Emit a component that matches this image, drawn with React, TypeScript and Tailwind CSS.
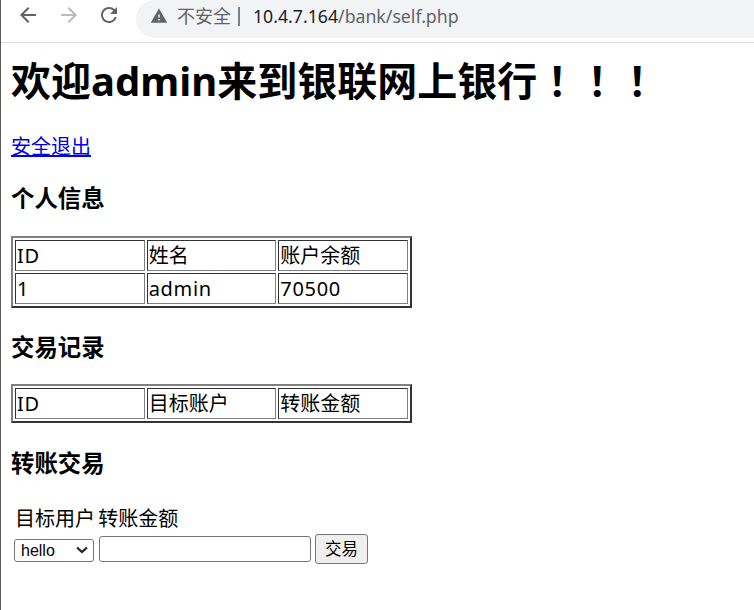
const fontStack = 'font-["Noto_Sans","Noto_Sans_CJK_SC",sans-serif]';

function TopBar() {
  return (
    <div className="flex h-[43px] items-start border-b border-[#dcdcdc] bg-white">
      <div className="flex items-center pl-[15px] pt-[3px]">
        <svg width="24" height="24" viewBox="0 0 24 24" fill="#5f6368">
          <path d="M20 11H7.83l5.59-5.59L12 4l-8 8 8 8 1.41-1.41L7.83 13H20v-2z" />
        </svg>
        <svg className="ml-[17px]" width="24" height="24" viewBox="0 0 24 24" fill="#b9bbbe">
          <path d="M4 11h12.17l-5.59-5.59L12 4l8 8-8 8-1.41-1.41L16.17 13H4v-2z" />
        </svg>
        <svg className="ml-[16px]" width="24" height="24" viewBox="0 0 24 24" fill="#5f6368">
          <path d="M17.65 6.35A7.958 7.958 0 0 0 12 4c-4.42 0-7.99 3.58-7.99 8s3.57 8 7.99 8c3.73 0 6.84-2.55 7.73-6h-2.08A5.99 5.99 0 0 1 12 18c-3.31 0-6-2.69-6-6s2.69-6 6-6c1.66 0 3.14.69 4.22 1.78L13 11h7V4l-2.35 2.35z" />
        </svg>
      </div>
      <div className="ml-[15px] flex h-[38px] flex-1 items-center rounded-l-[19px] bg-[#f1f3f4] pb-[6px] pl-[14px]">
        <svg width="18" height="18" viewBox="0 0 24 24" fill="#5f6368">
          <path d="M1 21h22L12 2 1 21zm12-3h-2v-2h2v2zm0-4h-2v-4h2v4z" />
        </svg>
        <span className="ml-[9px] text-[18px] text-[#5f6368]">不安全</span>
        <span className="ml-[7px] h-[19px] w-[2px] bg-[#7d8186]" />
        <span className="ml-[13px] text-[17.7px] text-[#202124]">10.4.7.164</span>
        <span className="text-[17.7px] text-[#5f6368]">/bank/self.php</span>
      </div>
    </div>
  );
}

function InfoTable({ rows }: { rows: string[][] }) {
  return (
    <table className="w-[401px] table-fixed border-separate border-spacing-[2px] border-2 border-t-[#808080] border-l-[#808080] border-r-[#333333] border-b-[#333333]">
      <tbody>
        {rows.map((row, i) => (
          <tr key={i}>
            {row.map((cell, j) => (
              <td
                key={j}
                className={`h-[31px] border border-t-[#333333] border-l-[#333333] border-r-[#808080] border-b-[#808080] p-[1px] text-[20px] leading-[27px] ${
                  /^[a-z0-9]+$/i.test(cell) ? 'tracking-[0.7px]' : ''
                }`}
              >
                {cell}
              </td>
            ))}
          </tr>
        ))}
      </tbody>
    </table>
  );
}

export default function App() {
  return (
    <div className={`h-[610px] w-[754px] overflow-hidden border-l border-[#5a5a5a] bg-white text-black ${fontStack}`}>
      <TopBar />
      <div className="px-[10px]">
        <h1 className="mt-[9px] text-[40px] font-bold leading-[54px]">
          欢迎admin来到银联网上银行
          <span className='font-["Noto_Sans_CJK_TC",sans-serif]'>！！！</span>
        </h1>
        <a href="#" className="mt-[25px] block w-fit text-[20px] leading-[28px] text-[#0000ee] underline">
          安全退出
        </a>
        <h3 className="mt-[21px] text-[23.4px] font-bold leading-[32px]">个人信息</h3>
        <div className="mt-[22px]">
          <InfoTable
            rows={[
              ['ID', '姓名', '账户余额'],
              ['1', 'admin', '70500'],
            ]}
          />
        </div>
        <h3 className="mt-[23px] text-[23.4px] font-bold leading-[32px]">交易记录</h3>
        <div className="mt-[21px]">
          <InfoTable rows={[['ID', '目标账户', '转账金额']]} />
        </div>
        <h3 className="mt-[24px] text-[23.4px] font-bold leading-[32px]">转账交易</h3>
        <form className="mt-[26px]">
          <div className="pl-[4px] text-[20px] leading-[28px] [word-spacing:-2px]">目标用户 转账金额</div>
          <div className="mt-[1px] flex items-center pl-[3px]">
            <div className="relative h-[23px] w-[80px]">
              <select className='h-[23px] w-[80px] appearance-none rounded-[3px] border border-[#767676] bg-white pl-[6px] font-["Liberation_Sans",sans-serif] text-[16px] leading-none'>
                <option>hello</option>
              </select>
              <svg className="pointer-events-none absolute left-[62px] top-[8px]" width="12" height="8" viewBox="0 0 12 8" fill="none" stroke="#222222" strokeWidth="2.2">
                <path d="M1 1.5l5 4.5 5-4.5" />
              </svg>
            </div>
            <input type="text" className="ml-[5px] h-[26px] w-[212px] rounded-[3px] border border-[#767676] bg-white" />
            <button type="button" className="ml-[4px] h-[30px] w-[53px] rounded-[3px] border border-[#767676] bg-[#efefef] text-[16.5px]">
              交易
            </button>
          </div>
        </form>
      </div>
    </div>
  );
}
